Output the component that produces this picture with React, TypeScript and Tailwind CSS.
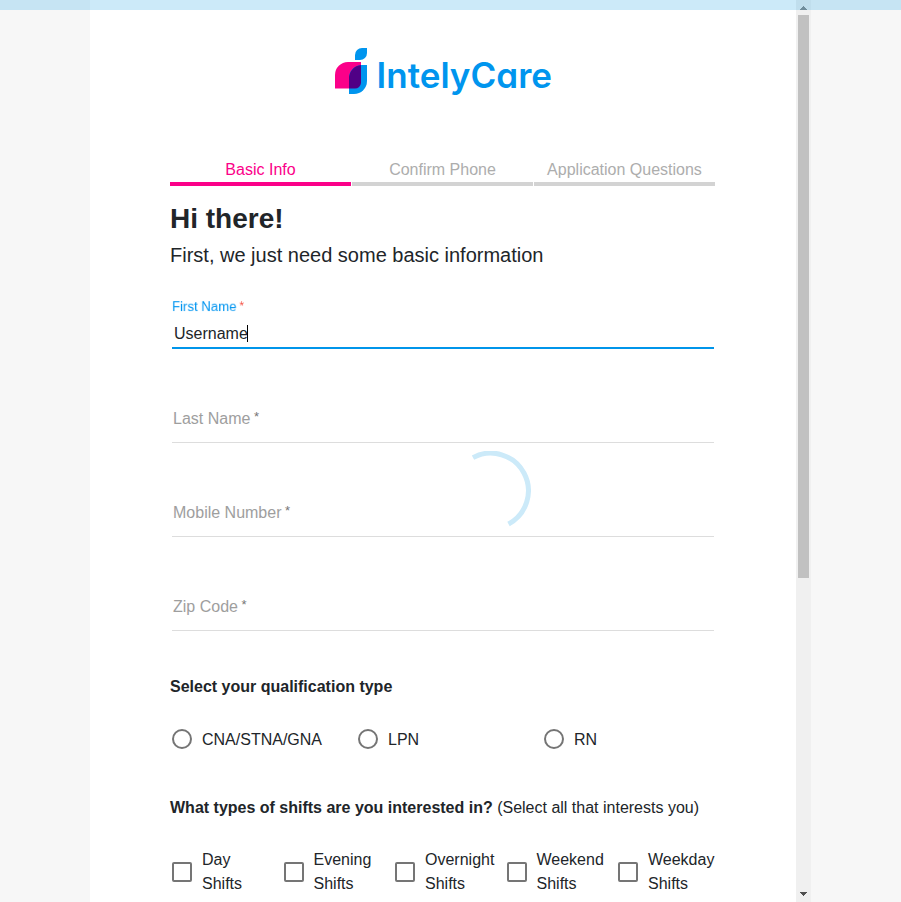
const fields = ['Last Name', 'Mobile Number', 'Zip Code'];
const qualifications = ['CNA/STNA/GNA', 'LPN', 'RN'];
const shifts = ['Day', 'Evening', 'Overnight', 'Weekend', 'Weekday'];

function Logo() {
  return (
    <svg width="224" height="56" viewBox="0 0 224 56" className="block overflow-visible" aria-label="IntelyCare">
      <path d="M21 13V8a7 7 0 0 1 7-7h5v5a7 7 0 0 1-7 7z" fill="#0095ee" />
      <path d="M1 41.5V28a13 13 0 0 1 13-13h13v21a6 6 0 0 1-6 5.5z" fill="#fb0089" />
      <path d="M15 47V31a13 13 0 0 1 13-13h5v16a13 13 0 0 1-13 13z" fill="#0095ee" />
      <path d="M15 41.5V31a13 13 0 0 1 12-13v18a6 6 0 0 1-6 5.5z" fill="#500086" />
      <text
        x="42.5"
        y="41"
        textLength="175.5"
        lengthAdjust="spacingAndGlyphs"
        fill="#0095ee"
        className="font-['Inter',sans-serif] text-[35px] font-semibold [font-feature-settings:'cv11']"
      >
        IntelyCare
      </text>
    </svg>
  );
}

function Tab({ label, active = false }: { label: string; active?: boolean }) {
  return (
    <div
      className={
        active
          ? 'h-[29px] flex-1 border-b-4 border-[#fb0089] pt-px text-center text-[#fb0089]'
          : 'h-[29px] flex-1 border-b-4 border-[#d3d3d3] pt-px text-center text-[#adadad]'
      }
    >
      {label}
    </div>
  );
}

function EmptyField({ label }: { label: string }) {
  return (
    <div className="mx-[2px] h-[94px] border-b border-[#dddddd] pt-[58px] pl-px text-[#9e9e9e]">
      {label}
      <span className="relative -top-[3px] ml-[3.5px] text-[13px] leading-none text-[#757575]">*</span>
    </div>
  );
}

function Scrollbar() {
  return (
    <div className="flex w-[15px] flex-col items-center bg-[#f0f0f0]">
      <svg width="15" height="15" viewBox="0 0 15 15" shapeRendering="crispEdges">
        <path d="M7 6h1v1h1v1h1v1h1v1H4V9h1V8h1V7h1z" fill="#8b8b8b" />
      </svg>
      <div className="h-[563px] w-[11px] bg-[#c1c1c1]" />
      <svg width="15" height="15" viewBox="0 0 15 15" className="mt-auto" shapeRendering="crispEdges">
        <path d="M4 5h7v1h-1v1H9v1H8v1H7V8H6V7H5V6H4z" fill="#505050" />
      </svg>
    </div>
  );
}

export default function App() {
  return (
    <div className="relative flex h-[902px] w-[901px] overflow-hidden bg-[#f7f7f7] font-['Liberation_Sans',Arial,sans-serif] text-[16px] leading-6 text-[#212529]">
      <main className="ml-[90px] w-[706px] bg-white px-20 pt-[47px]">
        <div className="ml-[164px]">
          <Logo />
        </div>

        <div className="mt-[54px] flex w-[545px] gap-px">
          <Tab label="Basic Info" active />
          <Tab label="Confirm Phone" />
          <Tab label="Application Questions" />
        </div>

        <h1 className="mt-[16px] text-[28px] leading-[34px] font-bold">Hi there!</h1>
        <p className="mt-[7px] text-[20px] leading-6">First, we just need some basic information</p>

        <div className="mx-[2px] mt-[31px] h-[51px] w-[542px] border-b-2 border-[#0095ea]">
          <div className="h-[18px] w-max origin-left scale-[0.825] text-[16px] leading-[18px] text-[#0095f0] will-change-transform">
            First Name
            <span className="relative -top-[2px] ml-[3.5px] text-[14px] leading-none text-[#f44336]">*</span>
          </div>
          <div className="mt-[6px] flex items-start pl-[2px]">
            <span>Username</span>
            <span className="mt-[3px] -ml-px h-[17px] w-px bg-black" />
          </div>
        </div>

        <div className="w-[546px]">
          {fields.map((f) => (
            <EmptyField key={f} label={f} />
          ))}
        </div>

        <h2 className="mt-[44px] font-bold">Select your qualification type</h2>
        <div className="mt-[29px] flex">
          {qualifications.map((q) => (
            <label key={q} className="flex w-[186px] shrink-0 items-start gap-[10px] pl-[2px]">
              <span className="mt-px size-5 shrink-0 rounded-full border-2 border-[#757575]" />
              {q}
            </label>
          ))}
        </div>

        <h2 className="mt-[44px]">
          <b>What types of shifts are you interested in?</b> (Select all that interests you)
        </h2>
        <div className="mt-[28px] flex w-[557.5px]">
          {shifts.map((s) => (
            <label key={s} className="flex w-[111.5px] shrink-0 items-center gap-[10px] pl-[2px]">
              <span className="size-5 shrink-0 rounded-[2px] border-2 border-[#757575]" />
              <span>
                {s}
                <br />
                Shifts
              </span>
            </label>
          ))}
        </div>
      </main>

      <Scrollbar />

      <div className="absolute inset-x-0 top-0 h-[10px] bg-[#0095e0]/20" />
      <svg className="absolute top-[451px] left-[450px]" width="81" height="80" viewBox="0 0 81 80">
        <path d="M23 6.6A37.5 37.5 0 0 1 58.5 73" fill="none" stroke="#cceaf9" strokeWidth="5" />
      </svg>
    </div>
  );
}
